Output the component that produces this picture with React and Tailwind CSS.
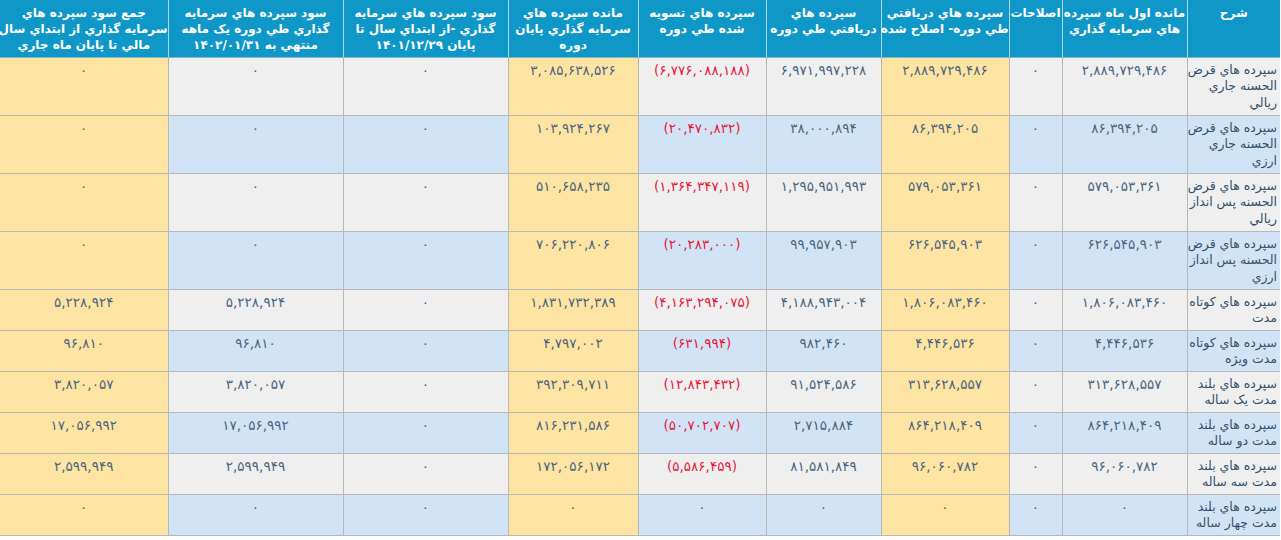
import React from "react";

const widths = [93, 125, 53, 128, 115, 128, 130, 165, 175, 168];
const yellowCols = new Set([3, 6, 9]);

const headers = [
  ["شرح"],
  ["مانده اول ماه سپرده", "هاي سرمايه گذاري"],
  ["اصلاحات"],
  ["سپرده هاي دريافتي", "طي دوره- اصلاح شده"],
  ["سپرده هاي", "دريافتي طي دوره"],
  ["سپرده هاي تسويه", "شده طي دوره"],
  ["مانده سپرده هاي", "سرمايه گذاري پايان", "دوره"],
  ["سود سپرده هاي سرمايه", "گذاري -از ابتداي سال تا", "پايان ۱۴۰۱/۱۲/۲۹"],
  ["سود سپرده هاي سرمايه", "گذاري طي دوره يک ماهه", "منتهي به ۱۴۰۲/۰۱/۳۱"],
  ["جمع سود سپرده هاي", "سرمايه گذاري از ابتداي سال", "مالي تا پايان ماه جاري"],
];

const rows = [
  [["سپرده هاي قرض", "الحسنه جاري", "ريالي"], "۲,۸۸۹,۷۲۹,۴۸۶", "۰", "۲,۸۸۹,۷۲۹,۴۸۶", "۶,۹۷۱,۹۹۷,۲۲۸", "(۶,۷۷۶,۰۸۸,۱۸۸)", "۳,۰۸۵,۶۳۸,۵۲۶", "۰", "۰", "۰"],
  [["سپرده هاي قرض", "الحسنه جاري", "ارزي"], "۸۶,۳۹۴,۲۰۵", "۰", "۸۶,۳۹۴,۲۰۵", "۳۸,۰۰۰,۸۹۴", "(۲۰,۴۷۰,۸۳۲)", "۱۰۳,۹۲۴,۲۶۷", "۰", "۰", "۰"],
  [["سپرده هاي قرض", "الحسنه پس انداز", "ريالي"], "۵۷۹,۰۵۳,۳۶۱", "۰", "۵۷۹,۰۵۳,۳۶۱", "۱,۲۹۵,۹۵۱,۹۹۳", "(۱,۳۶۴,۳۴۷,۱۱۹)", "۵۱۰,۶۵۸,۲۳۵", "۰", "۰", "۰"],
  [["سپرده هاي قرض", "الحسنه پس انداز", "ارزي"], "۶۲۶,۵۴۵,۹۰۳", "۰", "۶۲۶,۵۴۵,۹۰۳", "۹۹,۹۵۷,۹۰۳", "(۲۰,۲۸۳,۰۰۰)", "۷۰۶,۲۲۰,۸۰۶", "۰", "۰", "۰"],
  [["سپرده هاي کوتاه", "مدت"], "۱,۸۰۶,۰۸۳,۴۶۰", "۰", "۱,۸۰۶,۰۸۳,۴۶۰", "۴,۱۸۸,۹۴۳,۰۰۴", "(۴,۱۶۳,۲۹۴,۰۷۵)", "۱,۸۳۱,۷۳۲,۳۸۹", "۰", "۵,۲۲۸,۹۲۴", "۵,۲۲۸,۹۲۴"],
  [["سپرده هاي کوتاه", "مدت ويژه"], "۴,۴۴۶,۵۳۶", "۰", "۴,۴۴۶,۵۳۶", "۹۸۲,۴۶۰", "(۶۳۱,۹۹۴)", "۴,۷۹۷,۰۰۲", "۰", "۹۶,۸۱۰", "۹۶,۸۱۰"],
  [["سپرده هاي بلند", "مدت يک ساله"], "۳۱۳,۶۲۸,۵۵۷", "۰", "۳۱۳,۶۲۸,۵۵۷", "۹۱,۵۲۴,۵۸۶", "(۱۲,۸۴۳,۴۳۲)", "۳۹۲,۳۰۹,۷۱۱", "۰", "۳,۸۲۰,۰۵۷", "۳,۸۲۰,۰۵۷"],
  [["سپرده هاي بلند", "مدت دو ساله"], "۸۶۴,۲۱۸,۴۰۹", "۰", "۸۶۴,۲۱۸,۴۰۹", "۲,۷۱۵,۸۸۴", "(۵۰,۷۰۲,۷۰۷)", "۸۱۶,۲۳۱,۵۸۶", "۰", "۱۷,۰۵۶,۹۹۲", "۱۷,۰۵۶,۹۹۲"],
  [["سپرده هاي بلند", "مدت سه ساله"], "۹۶,۰۶۰,۷۸۲", "۰", "۹۶,۰۶۰,۷۸۲", "۸۱,۵۸۱,۸۴۹", "(۵,۵۸۶,۴۵۹)", "۱۷۲,۰۵۶,۱۷۲", "۰", "۲,۵۹۹,۹۴۹", "۲,۵۹۹,۹۴۹"],
  [["سپرده هاي بلند", "مدت چهار ساله"], "۰", "۰", "۰", "۰", "۰", "۰", "۰", "۰", "۰"],
];

function Lines({ lines }) {
  return lines.map((l, i) => (
    <div key={i} className="whitespace-nowrap">
      {l}
    </div>
  ));
}

export default function App() {
  return (
    <div
      className="bg-white w-[1281px] h-[540px] overflow-hidden"
      style={{ fontFamily: '"DejaVu Sans", sans-serif' }}
    >
      <table dir="rtl" className="table-fixed border-collapse w-[1280px]">
        <colgroup>
          {widths.map((w, i) => (
            <col key={i} style={{ width: w }} />
          ))}
        </colgroup>
        <thead>
          <tr className="h-[57px] bg-[#0f97c8]">
            {headers.map((h, i) => (
              <th
                key={i}
                className="align-top text-center text-white font-bold text-[12px] leading-[16px] pt-[5px] px-0 border-x border-[#a9d9ec] border-b border-b-[#7fb8cf] first:border-r-0 last:border-l-0"
              >
                <Lines lines={h} />
              </th>
            ))}
          </tr>
        </thead>
        <tbody>
          {rows.map((r, ri) => {
            const tall = ri < 4;
            const rowBg = ri % 2 === 0 ? "bg-[#efefef]" : "bg-[#d1e4f6]";
            return (
              <tr key={ri} className={tall ? "h-[58px]" : "h-[41px]"}>
                {r.map((c, ci) => {
                  const bg = yellowCols.has(ci) ? "bg-[#fee4a3]" : rowBg;
                  if (ci === 0) {
                    return (
                      <td
                        key={ci}
                        className={`${bg} align-top text-right text-[12.5px] leading-[16.5px] pt-[4px] pr-[3px] text-[#34506d] border border-[#b7b7b7] border-r-0`}
                      >
                        <Lines lines={c} />
                      </td>
                    );
                  }
                  const neg = c.startsWith("(");
                  return (
                    <td
                      key={ci}
                      className={`${bg} align-top text-center text-[13.5px] leading-[16.5px] pt-[4px] border border-[#b7b7b7] ${
                        neg ? "text-[#e8183a]" : "text-[#4a6580]"
                      } ${ci === 9 ? "border-l-0" : ""}`}
                    >
                      <span dir="ltr">{c}</span>
                    </td>
                  );
                })}
              </tr>
            );
          })}
        </tbody>
      </table>
    </div>
  );
}
